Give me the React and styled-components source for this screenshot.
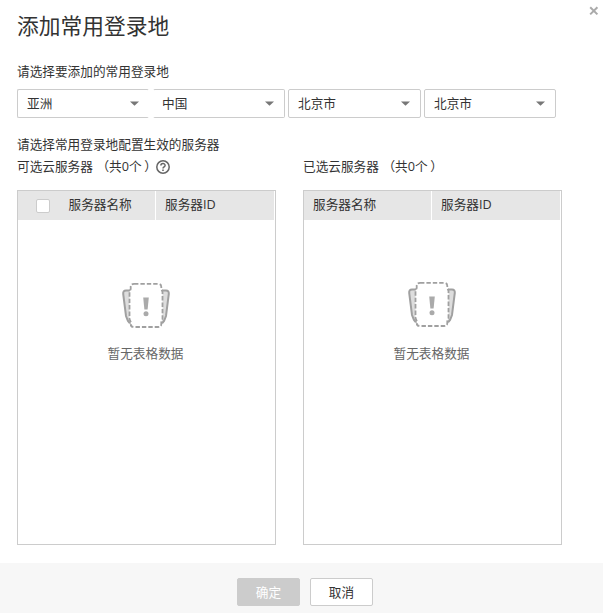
import React from "react";
import styled, { createGlobalStyle } from "styled-components";

const GlobalStyle = createGlobalStyle`
  * { box-sizing: border-box; }
  body {
    margin: 0;
    background: #fff;
    color: #333;
    font-family: "Open Sans", "Noto Sans CJK SC", sans-serif;
    font-size: 12.67px;
  }
`;

const Dialog = styled.div`
  position: relative;
  display: flex;
  flex-direction: column;
  width: 603px;
  height: 613px;
  overflow: hidden;
  white-space: nowrap;
`;

const CloseButton = styled.button`
  position: absolute;
  top: 6px;
  right: 4px;
  width: 10px;
  height: 10px;
  padding: 0;
  border: 0;
  background: none;
  svg { display: block; }
`;

const Body = styled.main`
  flex: 1;
  padding: 10px 17px 0;
`;

const Title = styled.h1`
  margin: 0;
  height: 50px;
  font-size: 21.75px;
  font-weight: 400;
  line-height: 32px;
`;

const Label = styled.div`
  height: ${(p) => p.$height}px;
  line-height: 22px;
`;

const SelectRow = styled.div`
  display: flex;
  height: 29px;
  margin-bottom: 15px;
`;

const SelectBox = styled.div`
  display: flex;
  align-items: center;
  justify-content: space-between;
  width: ${(p) => p.$width}px;
  margin-right: ${(p) => p.$gap}px;
  padding: 0 ${(p) => (p.$openRight ? 9 : 10)}px 0 ${(p) => (p.$openLeft ? 8 : 9)}px;
  border: 1px solid #ccc;
  border-left-color: ${(p) => (p.$openLeft ? "transparent" : "#ccc")};
  border-right-color: ${(p) => (p.$openRight ? "transparent" : "#ccc")};
  border-radius: 2px;
`;

const SelectText = styled.span`
  padding-bottom: 2px;
`;

const Panels = styled.div`
  display: flex;
  gap: 27px;
`;

const Panel = styled.section`
  width: 259px;
`;

const PanelTitle = styled.div`
  display: flex;
  align-items: center;
  height: 22px;
  margin-bottom: 13px;
  line-height: 22px;
  svg { margin: 2px 0 0 3px; }
`;

const Count = styled.span`
  margin-left: 3.5px;
`;

const CloseParen = styled.span`
  margin-left: 2.5px;
  width: 9px;
`;

const Table = styled.div`
  height: 355px;
  border: 1px solid #ccc;
`;

const HeaderRow = styled.div`
  display: flex;
  gap: 1px;
  height: 29px;
  margin-right: 1px;
`;

const HeaderCell = styled.div`
  display: flex;
  width: ${(p) => p.$width}px;
  padding-left: 9px;
  background: #e6e6e6;
  line-height: 26px;
`;

const Checkbox = styled.span`
  width: 14px;
  height: 14px;
  margin: 8px 18.5px 0 9px;
  border: 1px solid #ccc;
  border-radius: 2px;
  background: #fff;
`;

const Empty = styled.div`
  display: flex;
  flex-direction: column;
  align-items: center;
  padding: ${(p) => p.$top}px 2px 0 0;
  color: #666;
  line-height: 22px;
  svg { margin-bottom: ${(p) => p.$gap}px; }
`;

const Footer = styled.footer`
  display: flex;
  justify-content: center;
  gap: 10px;
  height: 50px;
  padding: 15px 0 0 7px;
  background: #f7f7f7;
`;

const Button = styled.button`
  width: 63px;
  height: 28px;
  padding: 0 0 2px;
  border: 1px solid #ccc;
  border-radius: 2px;
  background: ${(p) => (p.$muted ? "#ccc" : "#fff")};
  color: ${(p) => (p.$muted ? "#fff" : "#333")};
  font: inherit;
`;

const Caret = () => (
  <svg width="9" height="5" viewBox="0 0 9 5">
    <path d="M0 .5h9L4.5 4.8z" fill="#777" />
  </svg>
);

const Help = () => (
  <svg width="14" height="14" viewBox="0 0 14 14" fill="none" stroke="#666">
    <circle cx="7" cy="7" r="6.2" strokeWidth="1.5" />
    <path d="M4.9 5.6C4.9 2.8 9.1 2.9 9.1 5.4C9.1 6.9 7 6.8 7 8.5" strokeWidth="1.5" />
    <path d="M7 9.6v1.5" strokeWidth="1.6" />
  </svg>
);

const EmptyIcon = () => (
  <svg width="48" height="48" viewBox="0 0 48 48" fill="none" stroke="#a0a0a0">
    <path d="M8 8.5H4Q.9 8.5 1.2 12L4 34L6 39Q7 41 9 41" fill="#ddd" strokeWidth="2" />
    <path d="M40 8.5H44Q47.1 8.5 46.8 12L44 34L42 39Q41 41 39 41" fill="#ddd" strokeWidth="2" />
    <path
      d="M12 1.9H36Q39.3 1.9 39.3 5V7L40.5 10V37L39.3 40V42Q39.3 45 36 45H12Q8.7 45 8.7 42V40L7.5 37V10L8.7 7V5Q8.7 1.9 12 1.9Z"
      fill="#fff"
      strokeWidth="1.8"
      strokeDasharray="4.4 2"
    />
    <path d="M21.2 15.5H26.8L25.6 27.5H22.4Z" fill="#aaa" stroke="none" />
    <circle cx="24" cy="31.7" r="2.5" fill="#aaa" stroke="none" />
  </svg>
);

const selects = [
  { text: "亚洲", width: 132, gap: 4, openRight: true },
  { text: "中国", width: 132, gap: 3, openLeft: true },
  { text: "北京市", width: 133, gap: 3 },
  { text: "北京市", width: 132, gap: 0 },
];

function ServerPanel({ title, help, selectable, firstWidth, top, gap }) {
  return (
    <Panel>
      <PanelTitle>
        {title}
        <Count>（共0个</Count>
        <CloseParen>）</CloseParen>
        {help && <Help />}
      </PanelTitle>
      <Table>
        <HeaderRow>
          <HeaderCell $width={firstWidth}>
            {selectable && <Checkbox />}
            服务器名称
          </HeaderCell>
          <HeaderCell $width={255 - firstWidth}>服务器ID</HeaderCell>
        </HeaderRow>
        <Empty $top={top} $gap={gap}>
          <EmptyIcon />
          暂无表格数据
        </Empty>
      </Table>
    </Panel>
  );
}

export default function App() {
  return (
    <>
      <GlobalStyle />
      <Dialog>
        <CloseButton aria-label="关闭">
          <svg width="10" height="10" viewBox="0 0 10 10" stroke="#aaa" strokeWidth="2">
            <path d="M1.2 1.2l7.2 7.2M8.4 1.2L1.2 8.4" />
          </svg>
        </CloseButton>
        <Body>
          <Title>添加常用登录地</Title>
          <Label $height={29}>请选择要添加的常用登录地</Label>
          <SelectRow>
            {selects.map((s, i) => (
              <SelectBox
                key={i}
                $width={s.width}
                $gap={s.gap}
                $openLeft={s.openLeft}
                $openRight={s.openRight}
              >
                <SelectText>{s.text}</SelectText>
                <Caret />
              </SelectBox>
            ))}
          </SelectRow>
          <Label $height={22}>请选择常用登录地配置生效的服务器</Label>
          <Panels>
            <ServerPanel title="可选云服务器" help selectable firstWidth={137} top={62} gap={12} />
            <ServerPanel title="已选云服务器" firstWidth={127} top={61} gap={13} />
          </Panels>
        </Body>
        <Footer>
          <Button $muted>确定</Button>
          <Button>取消</Button>
        </Footer>
      </Dialog>
    </>
  );
}
